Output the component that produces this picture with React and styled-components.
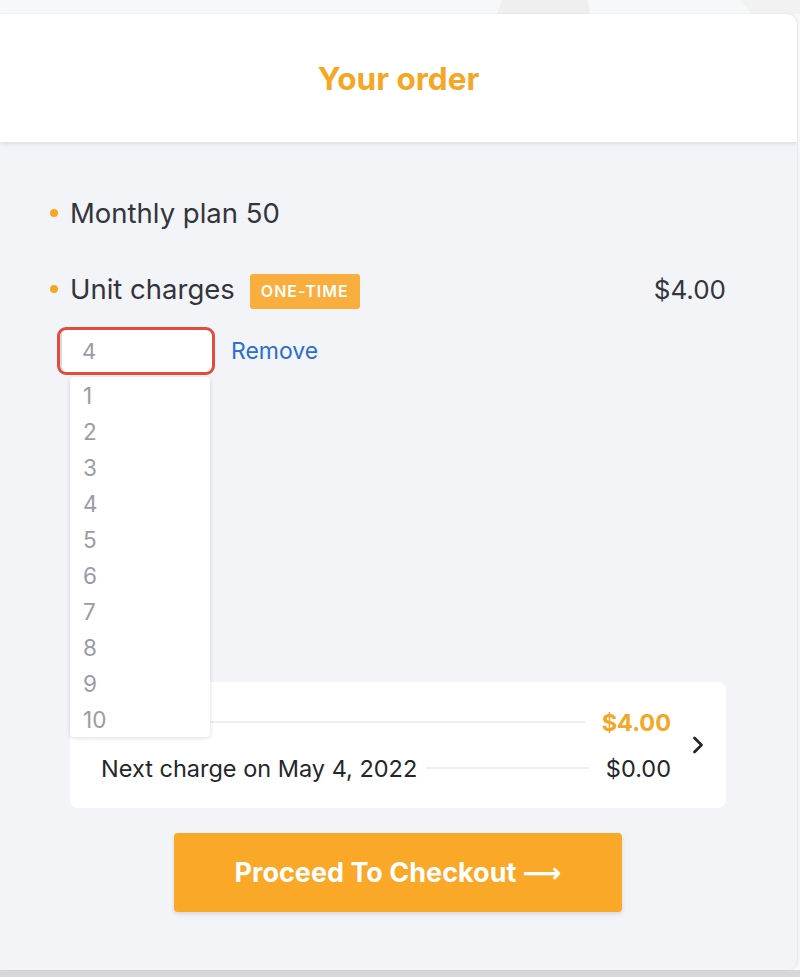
import styled, { createGlobalStyle } from 'styled-components'
import { ChevronRight } from 'lucide-react'

const GlobalStyle = createGlobalStyle`
  * {
    box-sizing: border-box;
  }

  body {
    margin: 0;
    background: #f7f8fa;
    font-family: Inter, 'Noto Sans', 'Liberation Sans', sans-serif;
    color: #33353d;
  }
`

const Page = styled.div`
  position: relative;
  height: 977px;
  padding-top: 14px;
  background: linear-gradient(to bottom, #f7f8fa 0, #f7f8fa 970px, #d7d7d9 970px);
  overflow: hidden;
`

const Backdrop = styled.svg`
  position: absolute;
  top: 0;
  left: 0;
`

const Panel = styled.div`
  position: relative;
  width: 797px;
  height: 956px;
  border-radius: 0 10px 10px 0;
  background: #f3f4f8;
  box-shadow: 1px 0 2px rgba(0, 0, 0, 0.08);
  overflow: hidden;
  display: flex;
  flex-direction: column;
`

const Header = styled.header`
  height: 128px;
  flex-shrink: 0;
  display: flex;
  align-items: center;
  justify-content: center;
  background: #fff;
  box-shadow: 0 2px 4px rgba(20, 30, 60, 0.1);
  border-radius: 0 10px 0 0;

  & h1 {
    margin: 0;
    color: #f5a623;
    font-size: 31.5px;
    font-weight: 700;
  }
`

const Body = styled.div`
  display: flex;
  flex-direction: column;
  padding: 54px 71px 0 50px;
`

const Item = styled.div`
  display: flex;
  align-items: center;
  height: 34px;
  margin-bottom: ${p => p.$gap || 0}px;
`

const Bullet = styled.span`
  width: 8px;
  height: 8px;
  border-radius: 50%;
  background: #f5a623;
  margin-right: 12px;
  flex-shrink: 0;
`

const ItemName = styled.span`
  font-size: 27.5px;
  color: #33353d;
`

const Badge = styled.span`
  margin: 4px 0 0 15px;
  padding: 0 11px;
  height: 35px;
  display: inline-flex;
  align-items: center;
  border-radius: 3px;
  background: #f9ae3d;
  color: #fff;
  font-size: 16px;
  font-weight: 600;
  letter-spacing: 1px;
  text-transform: uppercase;
`

const Price = styled.span`
  margin-left: auto;
  font-size: 26px;
  color: #33353d;
`

const Controls = styled.div`
  position: relative;
  display: flex;
  align-items: center;
  gap: 16px;
  margin: 21px 0 0 7px;
`

const QtyBox = styled.div`
  width: 158px;
  height: 48px;
  border: 3px solid #e24c3b;
  border-radius: 9px;
  background: #fff;
  display: flex;
  align-items: center;
  padding-left: 22px;
  font-size: 22px;
  color: #9b9ba7;
  box-shadow: inset 8px 0 0 -6px #d8d8de;
`

const RemoveLink = styled.a`
  color: #2b6fcf;
  font-size: 23px;
  text-decoration: none;
  cursor: pointer;
`

const Dropdown = styled.ul`
  position: absolute;
  top: 50px;
  left: 13px;
  width: 140px;
  margin: 0;
  padding: 0;
  list-style: none;
  background: #fff;
  border-radius: 4px;
  box-shadow: 0 1px 5px rgba(0, 0, 0, 0.14);
  z-index: 2;
`

const Option = styled.li`
  height: 36px;
  display: flex;
  align-items: center;
  padding: 0 13px;
  font-size: 22.5px;
  color: #9b9ba7;
`

const Summary = styled.div`
  margin: 307px 0 0 20px;
  height: 126px;
  background: #fff;
  border-radius: 8px;
  display: flex;
  align-items: center;
  padding: 0 14px 0 31px;
  gap: 13px;
`

const Lines = styled.div`
  flex: 1;
  display: flex;
  flex-direction: column;
  gap: 12px;
`

const Row = styled.div`
  display: flex;
  align-items: center;
  height: 34px;
  gap: 9px;
  font-size: 23.5px;
  color: #25262b;
`

const Rule = styled.span`
  flex: 1;
  height: 2px;
  background: #eeeef1;
  margin-right: 8px;
`

const Amount = styled.span`
  color: ${p => (p.$accent ? '#f5a623' : '#25262b')};
  font-weight: ${p => (p.$accent ? 700 : 400)};
`

const CheckoutButton = styled.button`
  align-self: center;
  margin: 25px 0 0 20px;
  width: 448px;
  height: 79px;
  border: none;
  border-radius: 4px;
  background: #f9a828;
  box-shadow: 0 2px 4px rgba(0, 0, 0, 0.12);
  color: #fff;
  font-family: inherit;
  font-size: 27px;
  font-weight: 700;
  cursor: pointer;

  & span {
    font-family: 'DejaVu Sans', sans-serif;
    font-weight: 700;
  }
`

const quantities = [1, 2, 3, 4, 5, 6, 7, 8, 9, 10]

const App = () => {
  return (
    <>
      <GlobalStyle />
      <Page>
        <Backdrop width="800" height="14" viewBox="0 0 800 14">
          <polygon points="502,0 588,0 590,14 497,14" fill="#efefef" />
          <polygon points="740,0 800,0 800,14 752,14" fill="#f2f2f3" />
        </Backdrop>
        <Panel>
          <Header>
            <h1>Your order</h1>
          </Header>
          <Body>
            <Item $gap={42}>
              <Bullet />
              <ItemName>Monthly plan 50</ItemName>
            </Item>
            <Item>
              <Bullet />
              <ItemName>Unit charges</ItemName>
              <Badge>One-time</Badge>
              <Price>$4.00</Price>
            </Item>
            <Controls>
              <QtyBox>4</QtyBox>
              <RemoveLink>Remove</RemoveLink>
              <Dropdown>
                {quantities.map(q => (
                  <Option key={q}>{q}</Option>
                ))}
              </Dropdown>
            </Controls>
            <Summary>
              <Lines>
                <Row>
                  Total
                  <Rule />
                  <Amount $accent>$4.00</Amount>
                </Row>
                <Row>
                  Next charge on May 4, 2022
                  <Rule />
                  <Amount>$0.00</Amount>
                </Row>
              </Lines>
              <ChevronRight size={28} strokeWidth={2.4} color="#25262b" />
            </Summary>
            <CheckoutButton>
              Proceed To Checkout <span>⟶</span>
            </CheckoutButton>
          </Body>
        </Panel>
      </Page>
    </>
  )
}

export default App
